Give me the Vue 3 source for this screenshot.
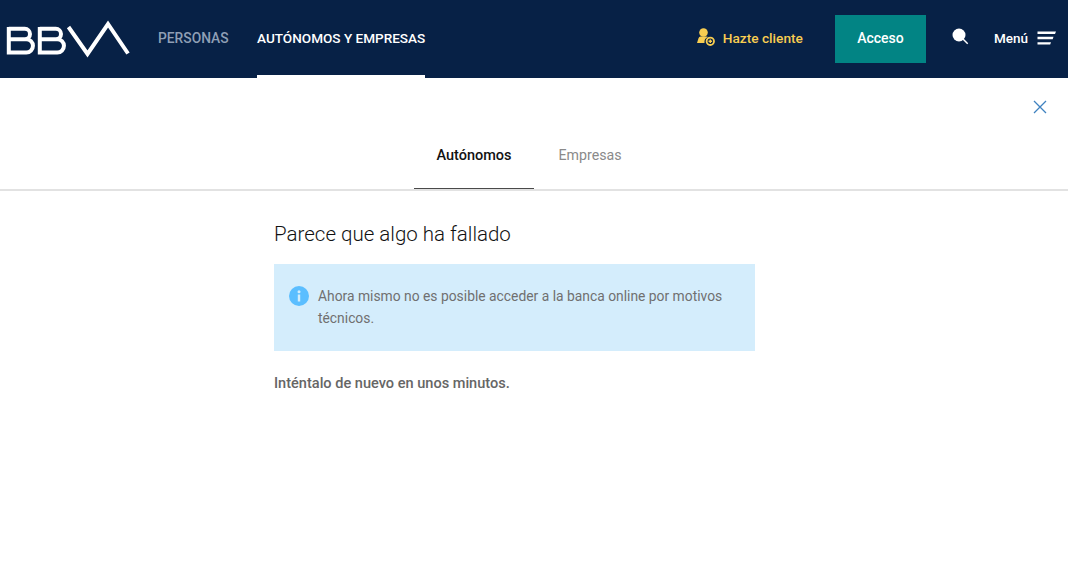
<template>
  <div class="page">
    <header class="topbar">
      <svg class="logo" width="125" height="38" viewBox="0 0 125 38" fill="none" stroke="#fff" stroke-width="4">
        <path d="M2.800 8.800h16a5.200 5.200 0 0 1 0 10.400H2.800M18.800 19.200h1.500a5.600 5.600 0 0 1 0 13.300H2.800V7" />
        <path d="M33.800 8.800h16a5.200 5.200 0 0 1 0 10.400H33.800M49.800 19.200h1.500a5.600 5.600 0 0 1 0 13.300H33.800V7" />
        <path d="M62.500 7L81.500 34 102 4 122 33.500" stroke-miterlimit="8" />
      </svg>
      <nav class="mainnav">
        <a class="navlink">PERSONAS</a>
        <a class="navlink active">AUTÓNOMOS Y EMPRESAS</a>
      </nav>
      <div class="actions">
        <a class="join">
          <svg class="join-icon" width="18" height="18" viewBox="0 0 18 18">
            <circle cx="6.500" cy="4.500" r="4.300" fill="#f8cd51" />
            <path d="M0 15l1.500-4.800q0.500-1.700 2-1.700h6q1 0 1.500 0.600A5.500 5.500 0 0 0 7.500 15z" fill="#f8cd51" />
            <circle cx="13.300" cy="13.300" r="3.700" fill="none" stroke="#f8cd51" stroke-width="1.800" />
            <path d="M11.500 13.300h3.600M13.300 11.500v3.600" stroke="#f8cd51" stroke-width="1.400" />
          </svg>
          Hazte cliente
        </a>
        <a class="access">Acceso</a>
        <svg class="search" width="17" height="17" viewBox="0 0 17 17">
          <circle cx="7" cy="7" r="6.500" fill="#fff" />
          <path d="M11 11l4.700 4.700" stroke="#fff" stroke-width="1.500" />
        </svg>
        <a class="menu">
          Menú
          <svg width="19" height="14" viewBox="0 0 19 14" fill="#fff">
            <path d="M0.500 0.500H19l-1 2.400H0.500zM0.500 5.800H16.500l-0.800 2.400H0.500zM0.500 11.200H14l-0.800 2.400H0.500z" />
          </svg>
        </a>
      </div>
    </header>

    <main>
      <div class="closerow">
        <svg width="14" height="14" viewBox="0 0 14 14" fill="none" stroke="#3f82c0" stroke-width="1.300">
          <path d="M1 1l12 12M13 1L1 13" />
        </svg>
      </div>
      <div class="tabs">
        <a v-for="tab in tabs" :key="tab.label" class="tab" :class="{ selected: tab.selected }">{{ tab.label }}</a>
      </div>
      <section class="content">
        <h1>Parece que algo ha fallado</h1>
        <div class="notice">
          <svg class="info" width="20" height="20" viewBox="0 0 20 20">
            <circle cx="10" cy="10" r="10" fill="#5bbeff" />
            <circle cx="10" cy="5.800" r="1.500" fill="#d4edfc" />
            <rect x="8.800" y="8.500" width="2.400" height="7" fill="#d4edfc" />
          </svg>
          <p>Ahora mismo no es posible acceder a la banca online por motivos técnicos.</p>
        </div>
        <p class="retry">Inténtalo de nuevo en unos minutos.</p>
      </section>
    </main>
  </div>
</template>

<script setup>
const tabs = [
  { label: 'Autónomos', selected: true },
  { label: 'Empresas', selected: false },
]
</script>

<style>
body {
  margin: 0;
  background: #fff;
}
</style>

<style scoped>
.page {
  min-height: 580px;
  font-family: "Roboto", "Liberation Sans", sans-serif;
  color: #121212;
}

.topbar {
  display: flex;
  align-items: center;
  height: 78px;
  padding: 0 12px 0 6px;
  background: #072146;
  box-sizing: border-box;
}

.logo {
  margin-right: 27px;
}

.mainnav {
  display: flex;
  align-self: stretch;
  gap: 28.5px;
}

.navlink {
  display: flex;
  align-items: center;
  padding-top: 1px;
  color: #8f9fb5;
  font-size: 13.8px;
  font-weight: 500;
  border-bottom: 3px solid transparent;
}

.navlink.active {
  color: #fff;
  font-size: 13.55px;
  border-bottom-color: #fff;
}

.actions {
  display: flex;
  align-items: center;
  margin-left: auto;
}

.join {
  display: flex;
  align-items: center;
  gap: 8px;
  margin-right: 32px;
  padding-bottom: 2px;
  color: #f8cd51;
  font-size: 13.7px;
  font-weight: 500;
}

.join-icon {
  margin-top: -2px;
}

.access {
  display: flex;
  align-items: center;
  justify-content: center;
  width: 91px;
  height: 48px;
  margin-right: 26px;
  padding-bottom: 2px;
  background: #028484;
  color: #fff;
  font-size: 14px;
  font-weight: 500;
  box-sizing: border-box;
}

.search {
  margin-top: -5px;
  margin-right: 25px;
}

.menu {
  display: flex;
  align-items: center;
  gap: 9px;
  padding-bottom: 2px;
  color: #fff;
  font-size: 13.5px;
  font-weight: 500;
}

.closerow {
  display: flex;
  justify-content: flex-end;
  padding: 22px 21px 0 0;
  height: 37px;
}

.tabs {
  display: flex;
  justify-content: center;
  gap: 3px;
  height: 52px;
  padding-right: 10px;
  border-bottom: 2px solid #e2e2e2;
}

.tab {
  height: 52px;
  padding: 8px 22px 0;
  box-sizing: border-box;
  color: #8a8a8a;
  font-size: 14.2px;
  line-height: 20px;
}

.tab.selected {
  padding-top: 9px;
  color: #121212;
  font-size: 14.5px;
  font-weight: 500;
  border-bottom: 1px solid #4a4a4a;
}

.content {
  width: 481px;
  margin: 0 0 0 274px;
}

h1 {
  margin: 30px 0 17px;
  font-size: 20.5px;
  line-height: 26px;
  font-weight: 300;
  color: #121212;
}

.notice {
  display: flex;
  align-items: flex-start;
  gap: 9px;
  height: 87px;
  padding: 21px 15px 0;
  background: #d4edfc;
  box-sizing: border-box;
}

.info {
  flex: none;
  margin-top: 1px;
}

.notice p {
  margin: 0;
  color: #707070;
  font-size: 13.85px;
  line-height: 22px;
}

.retry {
  margin: 23px 0 0;
  color: #666;
  font-size: 14.55px;
  font-weight: 500;
  line-height: 20px;
}
</style>
